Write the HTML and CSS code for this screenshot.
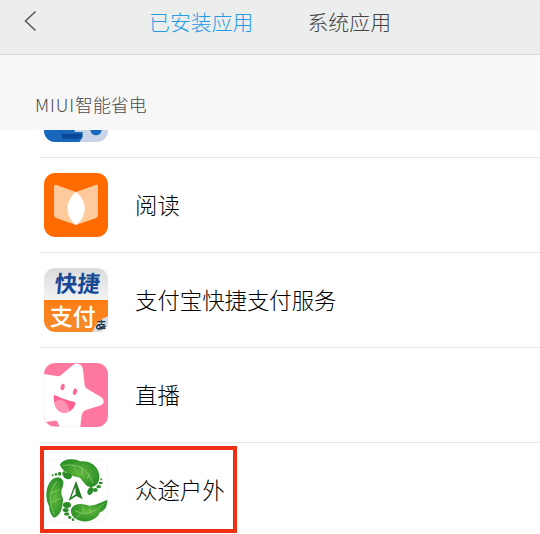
FILE: index.html
```html
<!DOCTYPE html>
<html lang="zh-CN">
<head>
<meta charset="utf-8">
<title>已安装应用</title>
<link rel="stylesheet" href="styles.css">
</head>
<body>
<header class="topbar">
  <svg class="back" viewBox="0 0 16 24"><path d="M13.500 2.500 3.500 12l10 9.500"/></svg>
  <nav class="tabs"><span class="tab active">已安装应用</span><span class="tab">系统应用</span></nav>
</header>
<div class="section"><span class="latin">MIUI</span>智能省电</div>
<main class="list">
  <div class="row partial">
    <svg class="icon" viewBox="0 0 192 192">
      <defs><clipPath id="round"><rect width="192" height="192" rx="34"/></clipPath></defs>
      <g clip-path="url(#round)"><rect width="192" height="192" fill="#c9d5e6"/><path d="M0 0H92V162H116V178L106 192H0Z" fill="#1767bd"/><path d="M54 167H114V176L106 182H54Z" fill="#084894"/><circle cx="156" cy="155" r="17" fill="#1767bd"/></g>
    </svg>
  </div>
  <div class="row">
    <svg class="icon" viewBox="24 24 192 192">
      <rect x="24" y="24" width="192" height="192" rx="34" fill="#ff6b00"/>
      <path d="M54 64Q54 57 61 60L120 81 179 60Q186 57 186 64V150Q186 156 180 159L120 180 60 159Q54 156 54 150Z" fill="#ffca9b"/>
      <path d="M120 81C86 108 86 154 120 180C155 154 155 108 120 81Z" fill="#fff"/>
    </svg>
    <span class="name">阅读</span>
  </div>
  <div class="row">
    <svg class="icon" viewBox="24 24 192 192">
      <defs>
        <linearGradient id="silver" x2="0" y2="1"><stop stop-color="#d9dbdd"/><stop offset="1" stop-color="#f3f3f3"/></linearGradient>
        <linearGradient id="orange" x2="0" y2="1"><stop stop-color="#ff7d12"/><stop offset="1" stop-color="#f58b2d"/></linearGradient>
        <clipPath id="pay"><rect x="24" y="24" width="192" height="192" rx="34"/></clipPath>
      </defs>
      <g clip-path="url(#pay)">
        <rect x="24" y="24" width="192" height="96" fill="url(#silver)"/>
        <rect x="24" y="120" width="192" height="96" fill="url(#orange)"/>
        <path d="M169 216Q183 180 216 169V216Z" fill="#d9dde1"/>
      </g>
      <text class="pay-top" transform="translate(54 97) skewX(-5)">快捷</text>
      <text class="pay-bottom" x="41" y="194">支付</text>
      <text class="pay-mark" x="182" y="203">支</text>
      <path d="M190 195C178 197 180 208 191 207Q203 206 209 197" fill="none" stroke="#203650" stroke-width="4"/>
    </svg>
    <span class="name">支付宝快捷支付服务</span>
  </div>
  <div class="row">
    <svg class="icon" viewBox="24 24 192 192">
      <defs><clipPath id="live"><rect x="24" y="24" width="192" height="192" rx="34"/></clipPath></defs>
      <g clip-path="url(#live)">
        <rect x="24" y="24" width="192" height="192" fill="#ff789f"/>
        <path d="M20 56 66 64Q73 64 78 58L111 30Q123 21 135 31Q140 36 141 44L146 91Q147 98 153 101L194 125Q209 136 200 147Q196 151 188 153L150 165Q139 169 137 182L132 220H72L65 201Q62 196 56 197L20 202Z" fill="#fff"/>
      </g>
      <ellipse cx="80" cy="96" rx="6" ry="10" transform="rotate(12 80 96)" fill="#ff6995"/>
      <ellipse cx="117" cy="110" rx="6" ry="10" transform="rotate(12 117 110)" fill="#ff6995"/>
      <path d="M53 125Q52 119 58 121Q88 136 114 140Q121 142 118 148Q110 171 86 174Q54 171 53 125Z" fill="#ff6292"/>
      <path d="M55 143Q70 126 87 141Q98 151 99 170Q67 183 55 143Z" fill="#ff94b2"/>
      <path class="outline" d="M25 57V182Q25 215 58 215H133"/>
    </svg>
    <span class="name">直播</span>
  </div>
  <div class="row last">
    <div class="highlight"></div>
    <svg class="icon" viewBox="24 54 192 192">
      <defs><radialGradient id="leaf"><stop stop-color="#62b83d"/><stop offset="1" stop-color="#2e9228"/></radialGradient></defs>
      <rect class="outline" x="25" y="55" width="190" height="190" rx="33"/>
      <g fill="url(#leaf)">
        <path d="M72 72C78 54 112 50 133 61C160 58 184 73 189 98C194 120 182 138 165 138C148 138 142 119 131 110C112 106 83 99 72 72Z"/>
        <path d="M60 110C78 106 87 121 80 137C74 152 75 160 81 173C81 202 73 225 53 230C45 222 39 210 40 197C28 177 28 146 40 126C46 116 52 111 60 110Z"/>
        <path d="M107 201C117 184 141 188 160 194C178 194 196 183 214 177C214 198 205 210 192 214C184 238 146 249 122 235C107 227 101 213 107 201Z"/>
      </g>
      <g fill="none" stroke="#9bd37b" stroke-width="2">
        <path d="M80 74Q146 61 171 126M109 70l12 20M137 77l3 27M160 98l-6 16"/>
        <path d="M63 121Q28 158 55 222M43 157l28-12M44 185l30-13"/>
        <path d="M117 209Q154 234 206 187M143 219l-3-23M165 217l-5-15M135 218l-15 12"/>
      </g>
      <g fill="#2b8b26">
        <ellipse cx="95" cy="105" rx="13" ry="9" transform="rotate(15 95 105)"/><ellipse cx="84" cy="98" rx="5" ry="7"/><ellipse cx="71" cy="98" rx="5" ry="6"/><circle cx="60" cy="100" r="4"/><circle cx="50" cy="103" r="3"/>
        <ellipse cx="163" cy="150" rx="8" ry="12" transform="rotate(25 163 150)"/><ellipse cx="178" cy="147" rx="7" ry="6"/><ellipse cx="188" cy="137" rx="7" ry="5"/><ellipse cx="194" cy="126" rx="6" ry="4"/><circle cx="196" cy="115" r="3"/>
        <ellipse cx="93" cy="192" rx="12" ry="9"/><ellipse cx="89" cy="207" rx="9" ry="6"/><ellipse cx="92" cy="219" rx="8" ry="5"/><circle cx="101" cy="229" r="5"/><circle cx="111" cy="236" r="4"/>
      </g>
      <path d="M120 119 98 180 121 165 140 175Z" fill="#277b27"/>
      <path d="M118 137 106 169 119 160Z" fill="#fff"/>
    </svg>
    <span class="name">众途户外</span>
  </div>
</main>
</body>
</html>
```
FILE: styles.css
```css
* { box-sizing: border-box; }
body {
  margin: 0;
  height: 534px;
  overflow: hidden;
  background: #fff;
  font-family: "Noto Sans CJK SC", sans-serif;
  font-weight: 300;
}
.topbar {
  display: flex;
  align-items: flex-start;
  height: 55px;
  padding-left: 22px;
  background: #eceeed;
  border-bottom: 1px solid #d9dada;
}
.back {
  width: 16px;
  height: 24px;
  margin-top: 9px;
  fill: none;
  stroke: #555;
  stroke-width: 1.5;
}
.tabs {
  display: flex;
  gap: 54px;
  margin: 6px 0 0 111px;
  font-size: 20.9px;
  line-height: 30px;
  color: #444;
}
.active { color: #269be4; }
.section {
  height: 75px;
  padding: 36px 0 0 35px;
  background: #f7f7f7;
  font-size: 17.9px;
  line-height: 26px;
  color: #4b4b4b;
}
.latin { letter-spacing: 0.9px; }
.list { overflow: hidden; height: 404px; }
.row {
  position: relative;
  display: flex;
  align-items: center;
  height: 95px;
  margin-left: 40px;
  padding-left: 4px;
  border-bottom: 1px solid #e6e6e6;
}
.partial { height: 28px; align-items: flex-end; padding-bottom: 15px; }
.last { border-bottom: 0; }
.icon { flex: none; width: 64px; height: 64px; }
.name {
  margin-left: 27px;
  padding-bottom: 3px;
  font-size: 22.4px;
  line-height: 32px;
  color: #000;
  white-space: nowrap;
}
.outline { fill: none; stroke: #eee; stroke-width: 2; }
.highlight {
  position: absolute;
  left: 0;
  top: 3px;
  width: 197px;
  height: 87px;
  border: 4px solid #ee3014;
}
.pay-top { font-size: 68px; font-weight: 700; fill: #164995; }
.pay-bottom { font-size: 69px; font-weight: 500; fill: #fff; }
.pay-mark { font-size: 28px; font-weight: 700; fill: #203650; }
```
